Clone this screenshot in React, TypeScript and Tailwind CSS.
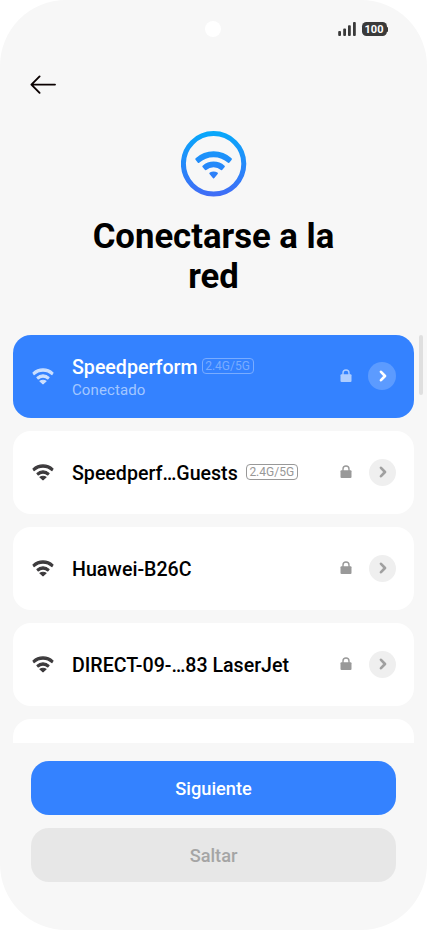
import clsx from "clsx";

type Network = {
  name: string;
  band?: string;
  status?: string;
};

const networks: Network[] = [
  { name: "Speedperform", band: "2.4G/5G", status: "Conectado" },
  { name: "Speedperf…Guests", band: "2.4G/5G" },
  { name: "Huawei-B26C" },
  { name: "DIRECT-09-…83 LaserJet" },
];

function StatusBar() {
  return (
    <div className="relative h-[58px] shrink-0">
      {/* Camera cutout */}
      <div className="absolute left-[205px] top-[21px] size-4 rounded-full bg-white" />
      <div className="flex justify-end gap-[6px] pr-[39px] pt-[22px]">
        <svg width="18" height="14" viewBox="0 0 18 14" fill="#3a3a3a">
          <rect x="0.2" y="9" width="2.8" height="5" rx="0.9" />
          <rect x="5.2" y="6.5" width="2.8" height="7.5" rx="0.9" />
          <rect x="10" y="3.2" width="2.8" height="10.8" rx="0.9" />
          <rect x="15" y="0" width="2.8" height="14" rx="0.9" />
        </svg>
        <div className="flex items-center">
          <span className="flex h-[14px] w-[25px] items-center justify-center rounded-[4.5px] bg-[#3a3a3a] text-[11px] font-bold leading-none text-white">
            100
          </span>
          <span className="h-[5px] w-[1.5px] rounded-r-full bg-[#3a3a3a]" />
        </div>
      </div>
    </div>
  );
}

function WifiBadge() {
  return (
    <svg width="66" height="66" viewBox="0 0 66 66" fill="none">
      <defs>
        <linearGradient id="ring" x1="33" y1="0" x2="33" y2="66" gradientUnits="userSpaceOnUse">
          <stop stopColor="#07a9fa" />
          <stop offset="0.5" stopColor="#248afa" />
          <stop offset="1" stopColor="#416bf6" />
        </linearGradient>
      </defs>
      <circle cx="32.6" cy="32.8" r="30.2" stroke="url(#ring)" strokeWidth="5" />
      {/* Flat caps softened with a thin outline join */}
      <g fill="url(#ring)" stroke="url(#ring)" strokeWidth="2" strokeLinejoin="round">
        <path d="M15.3 28.1a25.6 25.6 0 0 1 34.6 0l-2.2 2.9a22.4 22.4 0 0 0-30.2 0z" />
        <path d="M22.3 35.4a15.4 15.4 0 0 1 20.6 0l-2.3 2.8a12 12 0 0 0-16 0z" />
        <path d="M29.3 42.4q3.3-2 6.6 0l-3.3 4z" />
      </g>
    </svg>
  );
}

function WifiIcon() {
  return (
    <svg width="22" height="17" viewBox="0 0 22 17" fill="currentColor" className="shrink-0">
      <g stroke="currentColor" strokeWidth="1.1" strokeLinejoin="round">
        <path d="M0.9 4.8a15 15 0 0 1 20.2 0l-1.2 1.8a13 13 0 0 0-17.8 0z" />
        <path d="M4.9 9.3a9 9 0 0 1 12.2 0l-1.3 1.7a7 7 0 0 0-9.6 0z" />
        <path d="M7.9 13.2q3.1-2 6.2 0l-3.1 2.7z" />
      </g>
    </svg>
  );
}

function LockIcon() {
  return (
    <svg width="12" height="14" viewBox="0 0 12 14" fill="none" className="shrink-0">
      <path d="M3 6V4a3 3 0 0 1 6 0v2" stroke="currentColor" strokeWidth="1.4" />
      <rect x="0.5" y="5.2" width="11" height="7.8" rx="1" fill="currentColor" />
    </svg>
  );
}

function NetworkRow({ network }: { network: Network }) {
  const active = Boolean(network.status);

  return (
    <li
      className={clsx(
        "flex h-[82.5px] shrink-0 items-center rounded-[18px] pl-[19px] pr-[18px]",
        active ? "bg-[#3482ff]" : "bg-white",
      )}
    >
      <span className={active ? "text-[#cce0ff]" : "text-[#3c3a3c]"}>
        <WifiIcon />
      </span>
      <div className="ml-[18px] flex-1 pt-[3px]">
        <div className={clsx("flex items-center", active ? "gap-[4px]" : "gap-[8px]")}>
          <span
            className={clsx(
              "whitespace-nowrap text-[19.6px] font-medium leading-[24px]",
              active ? "text-white" : "text-black",
            )}
          >
            {network.name}
          </span>
          {network.band && (
            <span
              className={clsx(
                "-mt-[4px] flex h-4 w-[52px] items-center justify-center rounded-[4px] border text-[12px] leading-none",
                active ? "border-[#79acff] text-[#79acff]" : "border-[#989898] text-[#989898]",
              )}
            >
              {network.band}
            </span>
          )}
        </div>
        {network.status && (
          <p className="text-[15px] leading-5 tracking-[0.1px] text-[#a3c7ff]">{network.status}</p>
        )}
      </div>
      <span className={active ? "text-[#aecdff]" : "text-[#999999]"}>
        <LockIcon />
      </span>
      <span
        className={clsx(
          "flex items-center justify-center rounded-full",
          active ? "ml-4 size-7 bg-[#5c9bff] text-white" : "ml-[17px] size-[27px] bg-[#efefef] text-[#a0a0a0]",
        )}
      >
        <svg width="8" height="12" viewBox="0 0 8 12" fill="none" className="ml-px">
          <path d="M2 1.8 6 6l-4 4.2" stroke="currentColor" strokeWidth="2.6" strokeLinecap="round" strokeLinejoin="round" />
        </svg>
      </span>
    </li>
  );
}

export default function App() {
  return (
    <div className="h-[930px] w-[427px] bg-white">
      <main className="flex h-full flex-col overflow-hidden rounded-[66px] bg-[#f7f7f7] font-['Roboto',sans-serif]">
        <StatusBar />

        <button aria-label="Atrás" className="ml-[30px] mt-[17px] h-[20px] w-[27px] shrink-0">
          <svg width="27" height="20" viewBox="0 0 27 20" fill="none" stroke="#0a0000" strokeWidth="1.9" strokeLinecap="round" strokeLinejoin="round">
            <path d="M1.4 9.6H25M9.6 1.4 1.4 9.6l8.2 8.2" />
          </svg>
        </button>

        <header className="mt-[36px] flex shrink-0 flex-col items-center">
          <WifiBadge />
          <h1 className="mt-[19px] w-[280px] text-center text-[34.7px] font-bold leading-[40px] text-black">
            Conectarse a la red
          </h1>
        </header>

        <div className="mt-[39px] flex h-[408px] shrink-0 overflow-hidden pl-[13px]">
          <ul className="flex w-[401px] flex-col gap-[13.5px]">
            {networks.map((network) => (
              <NetworkRow key={network.name} network={network} />
            ))}
            <li className="h-[82.5px] shrink-0 rounded-[18px] bg-white" />
          </ul>
          <div className="ml-[5px] h-[60px] w-1 rounded-full bg-[#dfdfdf]" />
        </div>

        <footer className="mt-[17.5px] flex flex-col gap-[13px] px-[31px] text-[18.2px] font-medium">
          <button className="h-[54.5px] rounded-[18px] bg-[#3482ff] pt-[2px] text-white">Siguiente</button>
          <button className="h-[54px] rounded-[18px] bg-[#e7e7e7] pt-[2px] text-[#a5a5a5]">Saltar</button>
        </footer>
      </main>
    </div>
  );
}
